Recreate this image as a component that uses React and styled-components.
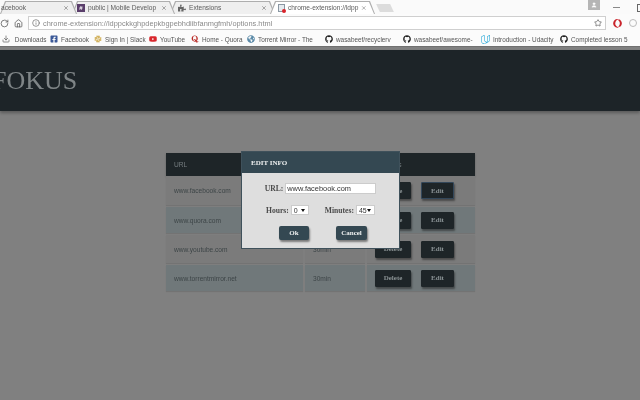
import React from "react";
import styled, { createGlobalStyle } from "styled-components";
import { RotateCw, Home, Info, Star, X, User, Download } from "lucide-react";
import { FaGithub, FaFacebookSquare, FaSlack, FaYoutube, FaQuora, FaPuzzlePiece, FaGlobeAmericas, FaOpera } from "react-icons/fa";
import { SiUdacity } from "react-icons/si";

const Global = createGlobalStyle`
  html, body { margin: 0; padding: 0; width: 640px; height: 400px; overflow: hidden; }
  body { font-family: "Liberation Sans", Arial, sans-serif; background: #808080; }
`;

const Browser = styled.div`
  width: 640px;
  height: 400px;
  display: flex;
  flex-direction: column;
  overflow: hidden;
  filter: blur(0.35px);
`;

const TabStrip = styled.div`
  height: 14px;
  background: #fafafa;
  display: flex;
  align-items: flex-end;
  flex: none;
  position: relative;
`;

const Tab = styled.div`
  position: relative;
  z-index: ${(p) => p.$z};
  width: ${(p) => p.$w}px;
  height: 13px;
  margin-right: -5px;
  flex: none;
  display: flex;
  align-items: center;
  gap: 3px;
  padding: 0 8px 0 ${(p) => p.$pad || 7}px;
  box-sizing: border-box;
  font-size: 6.6px;
  color: #5c5c5c;
  white-space: nowrap;

  &::before,
  &::after {
    content: "";
    position: absolute;
    clip-path: polygon(0 100%, 5px 0, calc(100% - 5px) 0, 100% 100%);
  }
  &::before {
    inset: 0;
    z-index: -2;
    background: #aeaeae;
  }
  &::after {
    inset: 1px 1px 0 1px;
    z-index: -1;
    background: ${(p) => (p.$active ? "#fff" : "#efefef")};
  }
`;

const TabTitle = styled.span`
  flex: 1;
`;

const Favicon = styled.span`
  width: 8px;
  height: 8px;
  flex: none;
  display: flex;
  align-items: center;
  justify-content: center;
  background: ${(p) => p.$bg || "transparent"};
  color: #fff;
  font-size: 6px;
  font-weight: bold;
`;

const PageIcon = styled.span`
  position: relative;
  width: 7px;
  height: 8px;
  flex: none;
  box-sizing: border-box;
  border: 1px solid #8a97a3;
  background: #e6ebef;

  &::after {
    content: "";
    position: absolute;
    right: -2px;
    bottom: -2px;
    width: 4px;
    height: 4px;
    border-radius: 50%;
    background: #d8232a;
  }
`;

const NewTab = styled.div`
  width: 14px;
  height: 8px;
  margin: 0 0 2px 8px;
  background: #dcdcdc;
  transform: skewX(25deg);
  flex: none;
`;

const WindowButtons = styled.div`
  position: absolute;
  top: 0;
  left: 588px;
  display: flex;
  align-items: flex-start;
  color: #777;
`;

const UserBadge = styled.div`
  width: 12px;
  height: 10px;
  background: #b5b5b5;
  color: #fff;
  display: flex;
  align-items: center;
  justify-content: center;
  margin-right: 13px;
`;

const MinButton = styled.div`
  width: 7px;
  height: 1px;
  margin-top: 7px;
  background: #888;
  margin-right: 17px;
`;

const RestoreButton = styled.div`
  width: 7px;
  height: 6px;
  margin-top: 4px;
  border: 1px solid #666;
  flex: none;
`;

const Toolbar = styled.div`
  height: 18px;
  flex: none;
  background: #fbfbfb;
  display: flex;
  align-items: center;
  gap: 5px;
  padding: 0 3px 0 0;
`;

const Omnibox = styled.div`
  width: 578px;
  height: 14px;
  margin-right: 2px;
  border: 1px solid #cfcfcf;
  box-sizing: border-box;
  display: flex;
  align-items: center;
  gap: 3px;
  padding: 0 3px;
  font-size: 7.4px;
  color: #8a8a8a;
  background: #fff;
`;

const UrlText = styled.span`
  flex: 1;
`;

const MenuDot = styled.span`
  width: 8px;
  height: 8px;
  margin-left: 2px;
  border: 1px solid #bbb;
  border-radius: 50%;
  box-sizing: border-box;
  flex: none;
`;

const Bookmarks = styled.div`
  height: 14px;
  flex: none;
  background: #fbfbfb;
  display: flex;
  align-items: center;
  padding-left: 2px;
  font-size: 6.4px;
  color: #555;
  white-space: nowrap;
  overflow: hidden;
`;

const Bookmark = styled.div`
  display: flex;
  align-items: center;
  gap: 3px;
  flex: none;
  width: ${(p) => p.$w}px;
`;

const Page = styled.div`
  position: relative;
  flex: 1;
  background: #808080;
  border-top: 1px solid #707070;
`;

const Masthead = styled.header`
  margin-top: 3px;
  height: 61px;
  background: #1d2428;
  box-shadow: 0 2px 3px rgba(0, 0, 0, 0.3);
  display: flex;
  align-items: center;
  font-family: "Liberation Serif", "Times New Roman", serif;
  font-size: 26px;
  color: #7f8587;
  overflow: hidden;
`;

const Logo = styled.div`
  margin-left: -8px;
  padding-top: 1px;
`;

const Table = styled.div`
  width: 309px;
  margin: 42px 0 0 166px;
  display: grid;
  grid-template-columns: 137px 60px 108px;
  grid-template-rows: 21px 29px 26px 28px 26px;
  gap: 2px;
  font-size: 6.6px;
  color: #3d4547;
`;

const HeadCell = styled.div`
  background: #1e2528;
  color: #767e81;
  height: 23px;
  margin-right: ${(p) => (p.$last ? 0 : -2)}px;
  padding-left: ${(p) => p.$pad || 8}px;
  display: flex;
  align-items: center;
  box-shadow: 0 1px 2px rgba(0, 0, 0, 0.25);
`;

const Cell = styled.div`
  background: ${(p) => (p.$alt ? "#70787a" : "#7b7b7b")};
  padding-left: 8px;
  display: flex;
  align-items: center;
  gap: 10px;
  box-shadow: 0 1px 1px rgba(0, 0, 0, 0.1);
`;

const DarkButton = styled.div`
  width: ${(p) => p.$w}px;
  height: 17px;
  box-sizing: border-box;
  background: #1e2528;
  color: #8a9294;
  border-radius: 1px;
  border: 1px solid ${(p) => (p.$focus ? "#33475a" : "#1e2528")};
  font-family: "Liberation Serif", serif;
  font-weight: bold;
  font-size: 7px;
  display: flex;
  align-items: center;
  justify-content: center;
  box-shadow: 1px 2px 2px rgba(0, 0, 0, 0.4);
`;

const Modal = styled.div`
  position: absolute;
  z-index: 2;
  left: 241px;
  top: 104px;
  width: 159px;
  height: 98px;
  box-sizing: border-box;
  background: #dedede;
  border: 1px solid #3f515b;
  font-family: "Liberation Serif", serif;
  font-weight: bold;
  color: #4a4a4a;
  font-size: 7.6px;
  display: flex;
  flex-direction: column;
`;

const ModalHead = styled.div`
  height: 21px;
  flex: none;
  background: #344852;
  color: #eef0f0;
  display: flex;
  align-items: center;
  padding-left: 9px;
  font-size: 7px;
`;

const ModalBody = styled.div`
  padding-top: 10px;
  display: flex;
  flex-direction: column;
  align-items: center;
`;

const UrlRow = styled.div`
  display: flex;
  align-items: center;
  gap: 2px;
  height: 11px;
  margin-bottom: 11px;
`;

const TimeRow = styled.div`
  display: flex;
  align-items: center;
  gap: 16px;
  height: 10px;
  margin-bottom: 11px;
`;

const TextBox = styled.div`
  width: 91px;
  height: 11px;
  box-sizing: border-box;
  background: #fff;
  border: 1px solid #ccc;
  padding-left: 1px;
  font-family: "Liberation Sans", sans-serif;
  font-weight: normal;
  font-size: 7.4px;
  line-height: 9px;
  color: #333;
`;

const SelectBox = styled.div`
  width: ${(p) => p.$w}px;
  height: 10px;
  box-sizing: border-box;
  background: #fff;
  border: 1px solid #ccc;
  padding: 0 3px 0 2px;
  display: flex;
  align-items: center;
  justify-content: space-between;
  font-family: "Liberation Sans", sans-serif;
  font-weight: normal;
  font-size: 7px;
  color: #333;
`;

const Caret = styled.span`
  width: 0;
  height: 0;
  border-left: 2px solid transparent;
  border-right: 2px solid transparent;
  border-top: 3px solid #111;
`;

const Group = styled.div`
  display: flex;
  align-items: center;
  gap: 2px;
`;

const Actions = styled.div`
  display: flex;
  gap: 27px;
  margin-left: 5px;
`;

const ModalButton = styled.div`
  width: ${(p) => p.$w}px;
  height: 14px;
  background: #344852;
  color: #eef0f0;
  border-radius: 2px;
  font-size: 7px;
  display: flex;
  align-items: center;
  justify-content: center;
  box-shadow: 1px 2px 2px rgba(0, 0, 0, 0.45);
`;

const rows = [
  ["www.facebook.com", "", false],
  ["www.quora.com", "", true],
  ["www.youtube.com", "30min", false],
  ["www.torrentmirror.net", "30min", true],
];

export default function App() {
  return (
    <Browser>
      <Global />
      <TabStrip>
        <Tab $w={77} $z={4} $pad={1}>
          <TabTitle>acebook</TabTitle>
          <X size={6} />
        </Tab>
        <Tab $w={103} $z={3} $pad={5}>
          <Favicon $bg="#5a3e6b">#</Favicon>
          <TabTitle>public | Mobile Develop</TabTitle>
          <X size={6} />
        </Tab>
        <Tab $w={105} $z={2} $pad={8}>
          <FaPuzzlePiece size={8} color="#666" />
          <TabTitle>Extensions</TabTitle>
          <X size={6} />
        </Tab>
        <Tab $w={105} $z={5} $active $pad={8}>
          <PageIcon />
          <TabTitle>chrome-extension://ldpp</TabTitle>
          <X size={6} />
        </Tab>
        <NewTab />
        <WindowButtons>
          <UserBadge>
            <User size={6} fill="#fff" />
          </UserBadge>
          <MinButton />
          <RestoreButton />
        </WindowButtons>
      </TabStrip>
      <Toolbar>
        <RotateCw size={9} color="#555" />
        <Home size={9} color="#555" />
        <Omnibox>
          <Info size={8} color="#666" />
          <UrlText>chrome-extension://ldppckkghpdepkbgpebhdiibfanmgfmh/options.html</UrlText>
          <Star size={8} color="#555" />
        </Omnibox>
        <FaOpera size={9} color="#c9242b" />
        <MenuDot />
      </Toolbar>
      <Bookmarks>
        <Bookmark $w={48}>
          <Download size={8} />
          &nbsp;Downloads
        </Bookmark>
        <Bookmark $w={44}>
          <FaFacebookSquare size={8} color="#3b5998" />
          Facebook
        </Bookmark>
        <Bookmark $w={55}>
          <FaSlack size={8} color="#c9a13a" />
          Sign In | Slack
        </Bookmark>
        <Bookmark $w={42}>
          <FaYoutube size={8} color="#d8262c" />
          YouTube
        </Bookmark>
        <Bookmark $w={56}>
          <FaQuora size={8} color="#b92b27" />
          Home - Quora
        </Bookmark>
        <Bookmark $w={78}>
          <FaGlobeAmericas size={8} color="#5b8aa8" />
          Torrent Mirror - The
        </Bookmark>
        <Bookmark $w={78}>
          <FaGithub size={8} color="#222" />
          wasabeef/recyclerv
        </Bookmark>
        <Bookmark $w={78}>
          <FaGithub size={8} color="#222" />
          wasabeef/awesome-
        </Bookmark>
        <Bookmark $w={79}>
          <SiUdacity size={9} color="#2aa9d8" />
          Introduction - Udacity
        </Bookmark>
        <Bookmark $w={70}>
          <FaGithub size={8} color="#222" />
          Completed lesson 5
        </Bookmark>
      </Bookmarks>
      <Page>
        <Masthead>
          <Logo>FOKUS</Logo>
        </Masthead>
        <Table>
          <HeadCell>URL</HeadCell>
          <HeadCell />
          <HeadCell $last $pad={13}>
            Actions
          </HeadCell>
          {rows.map(([url, time, alt], i) => (
            <React.Fragment key={url}>
              <Cell $alt={alt}>{url}</Cell>
              <Cell $alt={alt}>{time}</Cell>
              <Cell $alt={alt}>
                <DarkButton $w={36}>Delete</DarkButton>
                <DarkButton $w={33} $focus={i === 0}>
                  Edit
                </DarkButton>
              </Cell>
            </React.Fragment>
          ))}
        </Table>
        <Modal>
          <ModalHead>EDIT INFO</ModalHead>
          <ModalBody>
            <UrlRow>
              URL:
              <TextBox>www.facebook.com</TextBox>
            </UrlRow>
            <TimeRow>
              <Group>
                Hours:
                <SelectBox $w={18}>
                  0<Caret />
                </SelectBox>
              </Group>
              <Group>
                Minutes:
                <SelectBox $w={19}>
                  45
                  <Caret />
                </SelectBox>
              </Group>
            </TimeRow>
            <Actions>
              <ModalButton $w={30}>Ok</ModalButton>
              <ModalButton $w={31}>Cancel</ModalButton>
            </Actions>
          </ModalBody>
        </Modal>
      </Page>
    </Browser>
  );
}
